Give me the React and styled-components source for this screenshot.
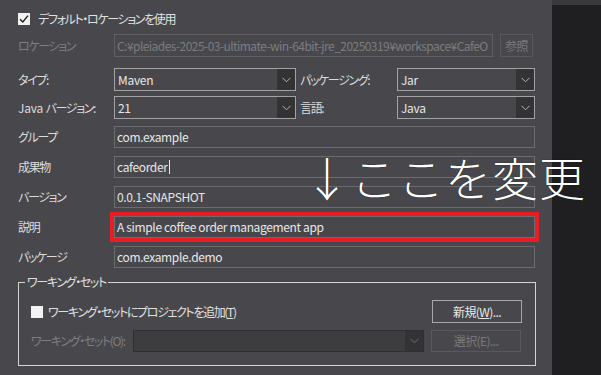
import React from "react"
import styled, { createGlobalStyle } from "styled-components"

const Global = createGlobalStyle`
    html, body {
        margin: 0;
        padding: 0;
        background: #1f1f21;
    }
    body {
        font-family: "Noto Sans CJK JP", "Noto Sans", sans-serif;
        font-size: 12px;
        font-feature-settings: "palt";
        letter-spacing: -0.3px;
        color: #e2e2e2;
    }
`

// Japanese UI text is set tighter, Meiryo UI style
const jpTight = `letter-spacing: -1.35px;`

const Page = styled.div`
    position: relative;
    display: flex;
    width: 601px;
    height: 375px;
    overflow: hidden;
`

const Panel = styled.div`
    width: 552px;
    height: 375px;
    background: #48484c;
    padding: 12px 0 0 18px;
    box-sizing: border-box;
    display: flex;
    flex-direction: column;
`

const Side = styled.div`
    flex: 1;
    background: #1f1f21;
    border-top: 5px solid #3a3a3d;
`

const Row = styled.div`
    display: flex;
    align-items: center;
    height: ${p => p.$h || 22}px;
    margin-top: ${p => p.$mt || 0}px;
`

const Label = styled.div`
    width: ${p => p.$w || 96}px;
    padding-left: ${p => p.$pl || 0}px;
    box-sizing: border-box;
    flex-shrink: 0;
    color: ${p => p.$disabled ? "#7e7e82" : "#dcdcdc"};
    line-height: 14px;
    white-space: nowrap;
    ${jpTight}
`

const Lat = styled.span`
    letter-spacing: -0.2px;
`

const Box = styled.span`
    width: 12px;
    height: 12px;
    background: #f2f2f2;
    display: inline-flex;
    align-items: center;
    justify-content: center;
    margin-right: ${p => p.$mr || 8}px;
    flex-shrink: 0;
`

const CheckLabel = styled.div`
    display: flex;
    align-items: center;
    line-height: 14px;
    color: #e0e0e0;
    white-space: nowrap;
    ${jpTight}
`

const Input = styled.div`
    box-sizing: border-box;
    width: ${p => p.$w || 421}px;
    height: ${p => p.$h || 22}px;
    border: 1px solid ${p => p.$disabled ? "#606064" : "#6c6c70"};
    background: #48484c;
    color: ${p => p.$disabled ? "#7c7c80" : "#e6e6e6"};
    padding: 0 2px;
    display: flex;
    align-items: center;
    white-space: nowrap;
    overflow: hidden;
    line-height: 14px;
    letter-spacing: ${p => p.$disabled ? -0.55 : -0.35}px;
    outline: ${p => p.$marked ? "4px solid #e81d25" : "none"};
`

const Caret = styled.span`
    display: inline-block;
    width: 1px;
    height: 14px;
    background: #e6e6e6;
    margin-left: 1px;
`

const Select = styled.div`
    box-sizing: border-box;
    width: ${p => p.$w}px;
    height: ${p => p.$h || 23}px;
    border: 1px solid ${p => p.$disabled ? "#2f2f32" : "#a2a2a4"};
    background: ${p => p.$disabled ? "#3d3d40" : "#48484c"};
    display: flex;
    align-items: stretch;
    flex-shrink: 0;
`

const SelectValue = styled.div`
    flex: 1;
    display: flex;
    align-items: center;
    padding-left: 3px;
    color: #e6e6e6;
    line-height: 14px;
`

const Arrow = styled.div`
    width: 18px;
    background: #333336;
    display: flex;
    align-items: center;
    justify-content: center;
`

const Button = styled.div`
    box-sizing: border-box;
    width: ${p => p.$w || 90}px;
    height: ${p => p.$h || 23}px;
    border: 1px solid ${p => p.$disabled ? "#59595d" : "#a8a8aa"};
    color: ${p => p.$disabled ? "#7a7a7e" : "#e8e8e8"};
    display: flex;
    align-items: center;
    justify-content: center;
    line-height: 14px;
    flex-shrink: 0;
    margin-left: ${p => p.$ml || 0}px;
    letter-spacing: -0.6px;
`

const Group = styled.fieldset`
    box-sizing: border-box;
    width: 518px;
    margin: 7px 0 0 0;
    padding: 11px 13px 13px 12px;
    border: 1px solid #d4d4d4;
    min-width: 0;
`

const Legend = styled.legend`
    padding: 0 2px;
    margin-left: -6px;
    line-height: 14px;
    color: #e0e0e0;
    ${jpTight}
`

const Spacer = styled.div`
    flex: 1;
`

const Note = styled.div`
    position: absolute;
    left: 304px;
    top: 153px;
    font-size: 46px;
    line-height: 46px;
    font-weight: 300;
    font-feature-settings: normal;
    letter-spacing: 1px;
    color: #ffffff;
    white-space: nowrap;
    text-shadow: 0 0 1px #000;
`

const Chevron = ({ color = "#b4b4b6" }) => (
    <svg width="9" height="6" viewBox="0 0 9 6">
        <polyline points="0.5,0.8 4.5,4.8 8.5,0.8" fill="none" stroke={color} strokeWidth="1" />
    </svg>
)

const Check = () => (
    <svg width="10" height="10" viewBox="0 0 10 10">
        <polyline points="1,5.2 3.8,8 9,1.6" fill="none" stroke="#1e1e1e" strokeWidth="1.4" />
    </svg>
)

const App = () => {
    return (
        <Page>
            <Global />
            <Panel>
                <Row $h={13}>
                    <CheckLabel><Box><Check /></Box>デフォルト・ロケーションを使用</CheckLabel>
                </Row>
                <Row $h={23} $mt={9}>
                    <Label $disabled>ロケーション</Label>
                    <Input $w={379} $h={23} $disabled>C:¥pleiades-2025-03-ultimate-win-64bit-jre_20250319¥workspace¥CafeO</Input>
                    <Button $w={33} $ml={7} $disabled>参照</Button>
                </Row>
                <Row $h={23} $mt={11}>
                    <Label>タイプ:</Label>
                    <Select $w={182}>
                        <SelectValue>Maven</SelectValue>
                        <Arrow><Chevron /></Arrow>
                    </Select>
                    <Label $w={101} $pl={4}>パッケージング:</Label>
                    <Select $w={138}>
                        <SelectValue>Jar</SelectValue>
                        <Arrow><Chevron /></Arrow>
                    </Select>
                </Row>
                <Row $h={23} $mt={5}>
                    <Label><Lat>Java </Lat>バージョン:</Label>
                    <Select $w={182}>
                        <SelectValue>21</SelectValue>
                        <Arrow><Chevron /></Arrow>
                    </Select>
                    <Label $w={101} $pl={4}>言語:</Label>
                    <Select $w={138}>
                        <SelectValue>Java</SelectValue>
                        <Arrow><Chevron /></Arrow>
                    </Select>
                </Row>
                <Row $mt={7}>
                    <Label>グループ</Label>
                    <Input>com.example</Input>
                </Row>
                <Row $mt={8}>
                    <Label>成果物</Label>
                    <Input>cafeorder<Caret /></Input>
                </Row>
                <Row $mt={8}>
                    <Label>バージョン</Label>
                    <Input>0.0.1-SNAPSHOT</Input>
                </Row>
                <Row $mt={8}>
                    <Label>説明</Label>
                    <Input $marked>A simple coffee order management app</Input>
                </Row>
                <Row $mt={8}>
                    <Label>パッケージ</Label>
                    <Input>com.example.demo</Input>
                </Row>
                <Group>
                    <Legend>ワーキング・セット</Legend>
                    <Row $h={23}>
                        <CheckLabel><Box $mr={5} />ワーキング・セットにプロジェクトを追加(<u>T</u>)</CheckLabel>
                        <Spacer />
                        <Button>新規(<u>W</u>)...</Button>
                    </Row>
                    <Row $h={22} $mt={7}>
                        <Label $w={102} $disabled>ワーキング・セット(O):</Label>
                        <Select $w={291} $h={22} $disabled>
                            <SelectValue />
                            <Arrow><Chevron color="#6e6e72" /></Arrow>
                        </Select>
                        <Button $h={22} $ml={7} $disabled>選択(E)...</Button>
                    </Row>
                </Group>
            </Panel>
            <Side />
            <Note>↓ここを変更</Note>
        </Page>
    )
}

export default App
